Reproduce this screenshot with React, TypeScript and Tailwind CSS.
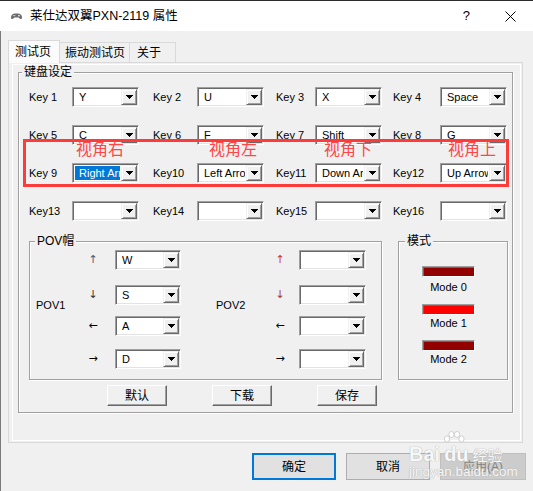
import React from "react";

const FONT = "font-['Liberation_Sans','Noto_Sans_CJK_SC',sans-serif]";

function DropBtn() {
  return (
    <div className="w-[16px] h-full shrink-0 bg-[#f0f0f0] border border-t-[#f0f0f0] border-l-[#f0f0f0] border-r-[#696969] border-b-[#696969] shadow-[inset_1px_1px_0_#ffffff,inset_-1px_-1px_0_#a0a0a0] flex items-center justify-center">
      <svg width="7" height="4" viewBox="0 0 7 4" shapeRendering="crispEdges">
        <path d="M0 0H7L3.5 4Z" fill="#000" />
      </svg>
    </div>
  );
}

function Combo({
  value = "",
  w = "w-[67px]",
  selected = false,
}: {
  value?: string;
  w?: string;
  selected?: boolean;
}) {
  return (
    <div
      className={`${w} h-[20px] flex bg-white border border-t-[#a0a0a0] border-l-[#a0a0a0] border-r-white border-b-white shadow-[inset_1px_1px_0_#696969,inset_-1px_-1px_0_#e3e3e3] p-[1px]`}
    >
      <div className="flex-1 min-w-0 p-[1px] flex">
        <div
          className={`flex-1 min-w-0 overflow-hidden whitespace-nowrap pl-[4px] text-[11px] leading-[14px] ${
            selected ? "bg-[#0078d7] text-white" : "text-black"
          }`}
        >
          {value}
        </div>
      </div>
      <DropBtn />
    </div>
  );
}

function Group({
  label,
  labelPos,
  className,
  children,
}: {
  label: string;
  labelPos: string;
  className: string;
  children?: React.ReactNode;
}) {
  return (
    <div
      className={`relative border border-[#a0a0a0] shadow-[inset_1px_1px_0_#ffffff,1px_1px_0_#ffffff] ${className}`}
    >
      <span
        className={`absolute -top-[8px] ${labelPos} px-[2px] bg-[#f0f0f0] text-[12px] leading-[14px] text-black`}
      >
        {label}
      </span>
      {children}
    </div>
  );
}

function RaisedButton({ children }: { children: React.ReactNode }) {
  return (
    <div className="w-[60px] h-[21px] bg-[#f0f0f0] border border-t-white border-l-white border-r-[#696969] border-b-[#696969] shadow-[inset_-1px_-1px_0_#a0a0a0] flex items-center justify-center text-[12px] leading-[14px] text-black">
      {children}
    </div>
  );
}

const keyRows: [string, string, boolean?][][] = [
  [
    ["Key 1", "Y"],
    ["Key 2", "U"],
    ["Key 3", "X"],
    ["Key 4", "Space"],
  ],
  [
    ["Key 5", "C"],
    ["Key 6", "F"],
    ["Key 7", "Shift"],
    ["Key 8", "G"],
  ],
  [
    ["Key 9", "Right Arrow", true],
    ["Key10", "Left Arrow"],
    ["Key11", "Down Arrow"],
    ["Key12", "Up Arrow"],
  ],
  [
    ["Key13", ""],
    ["Key14", ""],
    ["Key15", ""],
    ["Key16", ""],
  ],
];

const povRows: { arrow: string; mt: string; v1: string; c1: string; c2: string }[] = [
  { arrow: "↑", mt: "mt-0", v1: "W", c1: "text-[#4b5873]", c2: "text-[#c23a3a]" },
  { arrow: "↓", mt: "mt-[15px]", v1: "S", c1: "text-[#333]", c2: "text-[#a33a3a]" },
  { arrow: "←", mt: "mt-[11px]", v1: "A", c1: "text-black", c2: "text-black" },
  { arrow: "→", mt: "mt-[13px]", v1: "D", c1: "text-black", c2: "text-black" },
];

function Paw() {
  return (
    <svg width="24" height="16" viewBox="0 0 24 16" className="absolute -top-[13px] left-[-2px]">
      <g fill="#ffffff" stroke="#c4c4c4" strokeWidth="0.8">
        <ellipse cx="5" cy="8" rx="2.6" ry="3.2" />
        <ellipse cx="9.5" cy="3.5" rx="2.6" ry="3" />
        <ellipse cx="15" cy="3.5" rx="2.6" ry="3" />
        <ellipse cx="19.5" cy="8" rx="2.6" ry="3.2" />
      </g>
    </svg>
  );
}

export default function App() {
  return (
    <div className={`relative w-[533px] h-[491px] overflow-hidden bg-[#f0f0f0] flex flex-col ${FONT}`}>
      {/* Title bar */}
      <div className="h-[31px] shrink-0 bg-white border-t border-[#2b2b2b] flex items-center">
        <svg width="13" height="8" viewBox="0 0 13 8" className="ml-[10px]">
          <path d="M1 5.5C1 3 3 1.5 5 1.5H8C10 1.5 12 3 12 5.5C12 7 11 7.5 10 6.8L8.6 5.6H4.4L3 6.8C2 7.5 1 7 1 5.5Z" fill="#6b6b6b" />
          <circle cx="9" cy="3.6" r="0.9" fill="#e8e8e8" />
          <rect x="3" y="3.2" width="2.4" height="0.9" fill="#d8d8d8" />
        </svg>
        <span className="ml-[7px] text-[12.5px] leading-[16px] text-black whitespace-nowrap">
          莱仕达双翼PXN-2119 属性
        </span>
        <div className="flex-1" />
        <span className="text-[13px] leading-[16px] text-black">?</span>
        <svg width="11" height="11" viewBox="0 0 11 11" className="ml-[35px] mr-[17px]">
          <path d="M0.5 0.5L10.5 10.5M10.5 0.5L0.5 10.5" stroke="#000" strokeWidth="1" />
        </svg>
      </div>

      {/* Body */}
      <div className="flex-1 border-l border-[#7a7a7a] flex flex-col">
        {/* Tabs */}
        <div className="relative z-10 ml-[7px] mt-[9px] h-[22px] flex items-end">
          <div className="h-[23px] -mb-px w-[52px] bg-[#fbfbfb] border border-b-0 border-[#d9d9d9] pl-[6px] pt-[4px] text-[12px] leading-[14px] text-black">
            测试页
          </div>
          <div className="h-[20px] -ml-px w-[71px] bg-[#f0f0f0] border border-b-0 border-[#d9d9d9] pl-[5px] pt-[3px] text-[12px] leading-[14px] text-black">
            振动测试页
          </div>
          <div className="h-[20px] -ml-px w-[47px] bg-[#f0f0f0] border border-b-0 border-[#d9d9d9] pl-[7px] pt-[3px] text-[12px] leading-[14px] text-black">
            关于
          </div>
        </div>

        {/* Panel */}
        <div className="ml-[7px] w-[515px] h-[381px] border border-[#d9d9d9] pl-[3px] pt-[1px] pr-[1px] pb-[1px]">
          <div className="h-full border border-white pl-[5px] pt-[7px]">
            <Group label="键盘设定" labelPos="left-[3px]" className="w-[495px] h-[341px] pl-[10px] pt-[14px]">
              <div className="grid grid-cols-[43px_81px_44px_79px_39px_78px_47px_67px] gap-y-[18px] items-center">
                {keyRows.map((row) =>
                  row.map(([label, value, sel]) => (
                    <React.Fragment key={label}>
                      <div className="text-[11px] leading-[14px] text-black whitespace-pre">{label}</div>
                      <Combo value={value} selected={!!sel} />
                    </React.Fragment>
                  ))
                )}
              </div>

              <div className="flex mt-[20px] gap-[16px]">
                <Group label="POV帽" labelPos="left-[5px]" className="w-[353px] h-[139px] pt-[8px]">
                  <div className="flex">
                    {/* POV1 */}
                    <div className="flex items-center pl-[6px]">
                      <div className="w-[48px] mb-[9px] text-[11px] leading-[14px] text-black">POV1</div>
                      <div className="flex flex-col">
                        {povRows.map((r) => (
                          <div key={"a" + r.arrow} className={`flex items-center ${r.mt}`}>
                            <div className={`w-[18px] text-center text-[11px] leading-[14px] font-['DejaVu_Sans',sans-serif] ${r.c1}`}>
                              {r.arrow}
                            </div>
                            <div className="ml-[13px]">
                              <Combo value={r.v1} w="w-[66px]" />
                            </div>
                          </div>
                        ))}
                      </div>
                    </div>
                    {/* POV2 */}
                    <div className="flex items-center ml-[35px]">
                      <div className="w-[55px] mb-[9px] text-[11px] leading-[14px] text-black">POV2</div>
                      <div className="flex flex-col">
                        {povRows.map((r) => (
                          <div key={"b" + r.arrow} className={`flex items-center ${r.mt}`}>
                            <div className={`w-[18px] text-center text-[11px] leading-[14px] font-['DejaVu_Sans',sans-serif] ${r.c2}`}>
                              {r.arrow}
                            </div>
                            <div className="ml-[10px]">
                              <Combo value="" w="w-[67px]" />
                            </div>
                          </div>
                        ))}
                      </div>
                    </div>
                  </div>
                </Group>

                <Group label="模式" labelPos="left-[6px]" className="w-[110px] h-[139px] pt-[24px] pl-[23px]">
                  <div className="w-[53px] flex flex-col items-center">
                    <div className="w-[53px] h-[11px] bg-[#920000] border border-t-[#a0a0a0] border-l-[#a0a0a0] border-r-white border-b-white shadow-[inset_1px_1px_0_#696969]" />
                    <div className="mt-[4px] text-[11px] leading-[13px] text-black whitespace-nowrap">Mode 0</div>
                    <div className="mt-[10px] w-[53px] h-[11px] bg-[#ff0000] border border-t-[#a0a0a0] border-l-[#a0a0a0] border-r-white border-b-white shadow-[inset_1px_1px_0_#696969]" />
                    <div className="mt-[2px] text-[11px] leading-[13px] text-black whitespace-nowrap">Mode 1</div>
                    <div className="mt-[10px] w-[53px] h-[11px] bg-[#920000] border border-t-[#a0a0a0] border-l-[#a0a0a0] border-r-white border-b-white shadow-[inset_1px_1px_0_#696969]" />
                    <div className="mt-[2px] text-[11px] leading-[13px] text-black whitespace-nowrap">Mode 2</div>
                  </div>
                </Group>
              </div>

              <div className="flex gap-[45px] mt-[5px] ml-[78px]">
                <RaisedButton>默认</RaisedButton>
                <RaisedButton>下载</RaisedButton>
                <RaisedButton>保存</RaisedButton>
              </div>
            </Group>
          </div>
        </div>

        {/* Dialog buttons */}
        <div className="flex gap-[10px] mt-[10px] ml-[251px]">
          <div className="w-[84px] h-[27px] border-2 border-[#0078d7] bg-[#e1e1e1] flex items-center justify-center text-[12px] leading-[14px] text-black">
            确定
          </div>
          <div className="w-[84px] h-[27px] border border-[#adadad] bg-[#e1e1e1] flex items-center justify-center text-[12px] leading-[14px] text-black">
            取消
          </div>
          <div className="w-[86px] h-[27px] border border-[#bfbfbf] bg-[#cccccc] flex items-center justify-center text-[12px] leading-[14px] text-[#838383]">
            应用(A)
          </div>
        </div>
      </div>

      {/* Red annotation overlay */}
      <div className="absolute left-[23px] top-[139px] w-[486px] h-[48px] border-[3px] border-[#fd3b3b] pointer-events-none">
        <span className="absolute left-[50px] top-0 text-[16px] leading-[16px] text-[#ff4646] whitespace-nowrap">视角右</span>
        <span className="absolute left-[183px] top-0 text-[16px] leading-[16px] text-[#ff4646] whitespace-nowrap">视角左</span>
        <span className="absolute left-[298px] top-0 text-[16px] leading-[16px] text-[#ff4646] whitespace-nowrap">视角下</span>
        <span className="absolute left-[422px] top-0 text-[16px] leading-[16px] text-[#ff4646] whitespace-nowrap">视角上</span>
      </div>

      {/* Watermark */}
      <div className="absolute left-[409px] top-[443px] pointer-events-none text-white/90 [text-shadow:0_0_1px_#b0b0b0,0_0_1px_#b0b0b0]">
        <div className="flex items-end h-[21px]">
          <span className="font-['Liberation_Sans',sans-serif] font-bold text-[20px] leading-[20px]">Bai</span>
          <span className="relative ml-[4px] font-['Liberation_Sans',sans-serif] font-bold text-[20px] leading-[20px]">
            <Paw />
            du
          </span>
          <span className="ml-[4px] font-['Noto_Sans_CJK_SC',sans-serif] text-[15px] leading-[19px]">经验</span>
        </div>
        <div className="font-['Liberation_Sans',sans-serif] text-[13.5px] leading-[15px]">jingyan.baidu.com</div>
      </div>
    </div>
  );
}
